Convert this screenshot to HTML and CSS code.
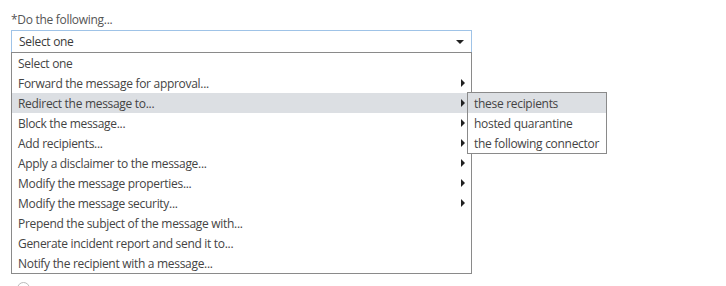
FILE: index.html
```html
<!DOCTYPE html>
<html>
<head>
<meta charset="utf-8">
<link rel="stylesheet" href="styles.css">
</head>
<body>
<div class="page">
  <div class="field">
    <div class="label">*Do the following...</div>
    <div class="select-wrap">
      <div class="select">
        <span>Select one</span>
        <span class="caret"></span>
      </div>
      <ul class="menu">
        <li class="item">Select one</li>
        <li class="item sub">Forward the message for approval...</li>
        <li class="item sub active">Redirect the message to...
          <ul class="submenu">
            <li class="item active">these recipients</li>
            <li class="item">hosted quarantine</li>
            <li class="item">the following connector</li>
          </ul>
        </li>
        <li class="item sub">Block the message...</li>
        <li class="item sub">Add recipients...</li>
        <li class="item sub">Apply a disclaimer to the message...</li>
        <li class="item sub">Modify the message properties...</li>
        <li class="item sub">Modify the message security...</li>
        <li class="item">Prepend the subject of the message with...</li>
        <li class="item">Generate incident report and send it to...</li>
        <li class="item">Notify the recipient with a message...</li>
      </ul>
    </div>
  </div>
  <div class="field mode">
    <div class="label">Choose a mode for this rule:</div>
    <div class="radio"></div>
  </div>
</div>
</body>
</html>
```
FILE: styles.css
```css
html, body {
  margin: 0;
  padding: 0;
  background: #fff;
}
body {
  font-family: "Open Sans", "Noto Sans", sans-serif;
  font-size: 12px;
  letter-spacing: -0.3px;
  color: #444;
}
.page {
  padding: 11px 254px 0 11px;
}
.label {
  line-height: 18px;
  color: #555;
}
.select-wrap {
  position: relative;
  margin-top: 1px;
}
.select {
  height: 21px;
  border: 1px solid #9fc3e7;
  display: flex;
  align-items: center;
  justify-content: space-between;
  padding: 0 6px 0 7px;
  color: #3a3a3a;
}
.caret {
  width: 0;
  height: 0;
  border-left: 4px solid transparent;
  border-right: 4px solid transparent;
  border-top: 4px solid #222;
  margin-right: 1px;
}
.menu, .submenu {
  list-style: none;
  margin: 0;
  padding: 0;
  background: #fff;
  border: 1px solid #8a8a8a;
}
.menu {
  position: absolute;
  top: 22px;
  left: 0;
  right: 0;
  z-index: 2;
}
.item {
  position: relative;
  height: 19px;
  padding-top: 1px;
  line-height: 19px;
  padding-left: 6px;
  white-space: nowrap;
}
.item.active {
  background: #dcdfe3;
}
.item.sub::after {
  content: "";
  position: absolute;
  right: 6px;
  top: 6px;
  width: 0;
  height: 0;
  border-top: 4px solid transparent;
  border-bottom: 4px solid transparent;
  border-left: 4px solid #222;
}
.submenu {
  position: absolute;
  top: -1px;
  left: 455px;
  width: 138px;
  z-index: 3;
}
.mode {
  margin-top: 208px;
}
.mode .label {
  color: #444;
}
.radio {
  margin-top: 3px;
  margin-left: 6px;
  width: 11px;
  height: 11px;
  border: 1px solid #bbb;
  border-radius: 50%;
}
```
